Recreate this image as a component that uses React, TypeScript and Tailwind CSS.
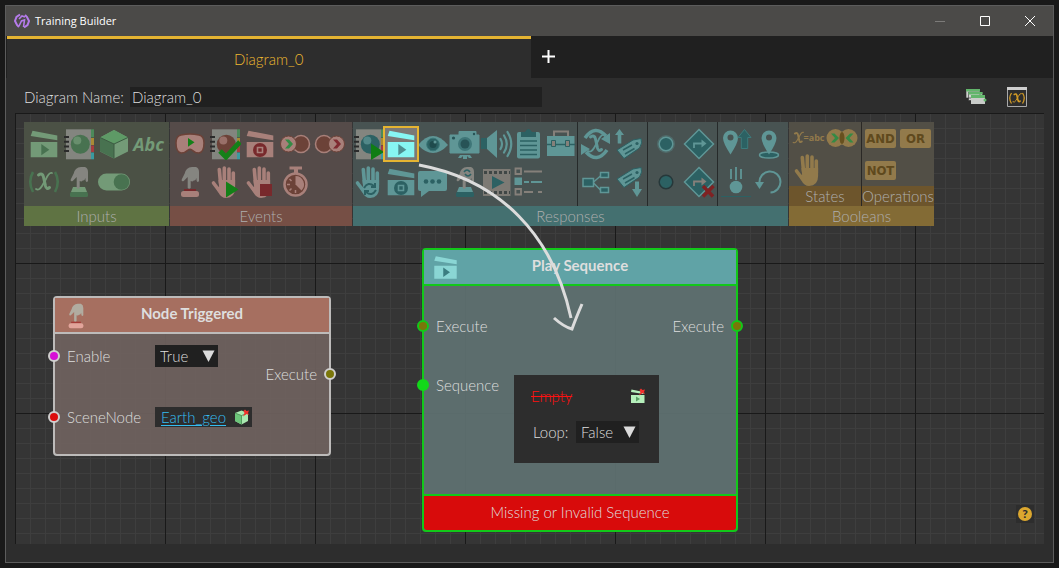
import { useState } from "react";
import clsx from "clsx";

type IconProps = { className?: string; size?: number } & React.PropsWithChildren;

interface Tool {
  name: string;
  icon: React.ReactNode;
  selected?: boolean;
}

const inputTools: Tool[] = [
  { name: "Sequence", icon: <Clapper mark="play" /> },
  { name: "Material", icon: <Notebook /> },
  { name: "Scene node", icon: <Cube /> },
  { name: "Text", icon: <TextIcon /> },
  { name: "Variable", icon: <VariableIcon /> },
  { name: "Trigger", icon: <PressHand /> },
  { name: "Toggle", icon: <Toggle /> },
];

const eventTools: Tool[] = [
  { name: "Session started", icon: <Headset /> },
  { name: "Material applied", icon: <Notebook mark="check" /> },
  { name: "Sequence stopped", icon: <Clapper mark="stop" /> },
  { name: "Zone entered", icon: <Zones side="left" /> },
  { name: "Zone left", icon: <Zones side="right" /> },
  { name: "Node triggered", icon: <PressHand flat /> },
  { name: "Grab started", icon: <Hand mark="play" /> },
  { name: "Grab stopped", icon: <Hand mark="stop" /> },
  { name: "Timer", icon: <Stopwatch /> },
];

const responseTools: Tool[][] = [
  [
    { name: "Apply material", icon: <Notebook mark="play" /> },
    { name: "Play sequence", icon: <Clapper mark="play" />, selected: true },
    { name: "Visibility", icon: <Eye /> },
    { name: "Viewpoint", icon: <Camera /> },
    { name: "Sound", icon: <Speaker /> },
    { name: "Clipboard", icon: <Clipboard /> },
    { name: "Toolbox", icon: <Toolbox /> },
    { name: "Switch grab", icon: <Hand mark="cycle" /> },
    { name: "Stop sequence", icon: <Clapper mark="stop" /> },
    { name: "Message", icon: <Message /> },
    { name: "Switch trigger", icon: <PressHand mark /> },
    { name: "Video", icon: <Film /> },
    { name: "Checklist", icon: <Checklist /> },
  ],
  [
    { name: "Set variable", icon: <CycleVariable /> },
    { name: "Send tag", icon: <Tag up /> },
    { name: "Hierarchy", icon: <Hierarchy /> },
    { name: "Receive tag", icon: <Tag /> },
  ],
  [
    { name: "Highlight", icon: <Dot glow /> },
    { name: "Show path", icon: <RoadSign /> },
    { name: "Clear highlight", icon: <Dot /> },
    { name: "Hide path", icon: <RoadSign crossed /> },
  ],
  [
    { name: "Move to", icon: <PinUp /> },
    { name: "Location", icon: <Pin /> },
    { name: "Drop", icon: <Drop /> },
    { name: "Reset", icon: <Undo /> },
  ],
];

const stateTools: Tool[] = [
  { name: "Compare", icon: <Compare /> },
  { name: "Overlap", icon: <Overlap /> },
  { name: "Grabbed", icon: <Hand /> },
];

export default function App() {
  const [name, setName] = useState("Diagram_0");

  return (
    <div className="flex min-h-screen flex-col bg-[#191919] p-[5px] font-['Lato',sans-serif] text-[15px] font-light text-[#dedede]">
      <main className="flex flex-1 flex-col border border-[#5c5c5c] bg-[#2d2d2d]">
        <TitleBar />
        <nav className="flex h-[42px] bg-[#202020]">
          <button className="ml-px w-1/2 border-t-3 border-[#e5b432] bg-[#2d2d2d] pt-[2px] text-[#ecb730]">
            {name}
          </button>
          <button aria-label="New diagram" className="px-[11px] pb-[2px] text-white">
            <svg width="13" height="13" viewBox="0 0 13 13" stroke="currentColor" strokeWidth="2">
              <path d="M6.500 0v13M0 6.500h13" />
            </svg>
          </button>
        </nav>

        <div className="flex items-center px-[18px] pt-[9px] pb-[6px]">
          <label htmlFor="diagram-name" className="w-[106px] leading-5">
            Diagram Name:
          </label>
          <input
            id="diagram-name"
            className="h-5 w-[412px] bg-[#202020] px-[2px] outline-none"
            value={name}
            onChange={(e) => setName(e.target.value)}
          />
          <div className="ml-auto flex items-center gap-5 pr-2">
            <button aria-label="Layers">
              <LayersIcon />
            </button>
            <button aria-label="Variables">
              <VariablesWindow />
            </button>
          </div>
        </div>

        <section className="relative mx-[9px] mb-[18px] flex-1 overflow-hidden border-t border-l border-[#191919] bg-[#353535] bg-[linear-gradient(90deg,transparent_149px,#191919_149px),linear-gradient(180deg,transparent_149px,#191919_149px),linear-gradient(90deg,transparent_14px,#3e3e3e_14px),linear-gradient(180deg,transparent_14px,#3e3e3e_14px)] bg-[size:150px_150px,150px_150px,15px_15px,15px_15px] p-2">
          <Palette />
          <NodeTriggered />
          <PlaySequence />
          <svg
            className="pointer-events-none absolute top-0 left-0"
            width="600"
            height="240"
            viewBox="16 114 600 240"
            fill="none"
            stroke="#dcdcdc"
            strokeWidth="3"
          >
            <path d="M419 165C500 180 553 235 571 318" />
            <path d="M554 318Q564 327 572 329Q576 318 582 304" />
          </svg>
          <button
            aria-label="Help"
            className="absolute right-[10px] bottom-[21px] flex size-[18px] items-center justify-center bg-[#2d2d2d]"
          >
            <span className="size-[14px] rounded-full bg-[#dba72f] text-center text-[12px] leading-[14px] font-black text-[#2d2d2d]">
              ?
            </span>
          </button>
        </section>
      </main>
    </div>
  );
}

function TitleBar() {
  return (
    <header className="flex h-[30px] items-center bg-[#4b4a48] pl-2 text-white">
      <svg width="16" height="16" viewBox="0 0 16 16" fill="none" stroke="#b57bea" strokeWidth="2">
        <path d="M6 1.500L2.500 4 1 8l2 4 2 2" />
        <path d="M10 14.500l3.500-2.500L15 8l-2-4-2-2" />
        <path d="M5 13l2.500-5 3-1-1 7M5 6l3-3 3 1" strokeWidth="1.600" />
      </svg>
      <h1 className="ml-[5px] font-['Open_Sans',sans-serif] text-[11px] font-normal">
        Training Builder
      </h1>
      <div className="ml-auto flex">
        <button aria-label="Minimize" className="flex w-[45px] justify-center text-[#7c7b79]">
          <WindowGlyph d="M0 5.500h10" />
        </button>
        <button aria-label="Maximize" className="flex w-[45px] justify-center">
          <WindowGlyph d="M.5.5h9v9h-9z" />
        </button>
        <button aria-label="Close" className="flex w-[46px] justify-center">
          <WindowGlyph d="M0 0l10 10M10 0L0 10" />
        </button>
      </div>
    </header>
  );
}

function WindowGlyph(props: { d: string }) {
  return (
    <svg width="10" height="10" viewBox="0 0 10 10" fill="none" stroke="currentColor">
      <path d={props.d} />
    </svg>
  );
}

/* Palette */

function Palette() {
  return (
    <div className="flex w-max gap-px">
      <Group title="Inputs" className="w-[145px] bg-[#4b5145] text-[#739a77] [--dark:#487250]" bar="bg-[#5f7343]">
        <Tools tools={inputTools} cell="h-[38px] w-[35px]" className="flex-1 px-[2px] pt-[3px]" />
      </Group>
      <Group
        title="Events"
        className="w-[182px] bg-[#554b49] text-[#a8807a] [--dark:#6c4238] [--stop:#78292c]"
        bar="bg-[#764f45]"
      >
        <Tools tools={eventTools} cell="h-[38px] w-[35px]" className="flex-1 px-[2px] pt-[3px]" />
      </Group>
      <Group title="Responses" className="bg-[#485352] text-[#5f9696] [--dark:#2c6163]" bar="bg-[#447070]">
        <div className="flex flex-1 gap-px bg-[#262a2a]">
          {responseTools.map((tools, i) => (
            <Tools
              key={i}
              tools={tools}
              cell={i === 0 ? "h-[38px] w-8" : "h-[38px] w-[33px]"}
              className={clsx(
                "flex-none bg-[#485352] pt-[3px]",
                i === 0 ? "w-[224px]" : i === 3 ? "w-[70px] px-px" : "w-[69px] px-px"
              )}
            />
          ))}
        </div>
      </Group>
      <Group title="Booleans" className="bg-[#524f46] text-[#927a4b] [--dark:#67501f]" bar="bg-[#836b35]">
        <div className="flex flex-1 gap-px bg-[#2a2825]">
          <div className="flex w-[72px] flex-col bg-[#524f46]">
            <Tools tools={stateTools} cell="h-8 w-[34px]" className="flex-1 px-[2px]" />
            <Caption className="bg-[#6d552c]">States</Caption>
          </div>
          <div className="flex w-[72px] flex-col bg-[#524f46]">
            <div className="flex flex-1 flex-wrap content-start gap-x-[4px] gap-y-[13px] px-[3px] pt-[7px]">
              {["AND", "OR", "NOT"].map((op) => (
                <button
                  key={op}
                  className="h-[19px] w-[31px] rounded-[2px] bg-[#927a4b] font-['Liberation_Sans_Narrow','DejaVu_Sans_Condensed',sans-serif] text-[13px] leading-[19px] font-bold text-[#5f491d]"
                >
                  {op}
                </button>
              ))}
            </div>
            <Caption className="bg-[#6d552c]">Operations</Caption>
          </div>
        </div>
      </Group>
    </div>
  );
}

function Group(props: { title: string; className: string; bar: string } & React.PropsWithChildren) {
  return (
    <div className={clsx("flex h-[104px] flex-col", props.className)}>
      {props.children}
      <Caption className={props.bar}>{props.title}</Caption>
    </div>
  );
}

function Caption(props: { className?: string } & React.PropsWithChildren) {
  return (
    <div className={clsx("h-5 text-center leading-5 text-[#aeaeae]", props.className)}>
      {props.children}
    </div>
  );
}

function Tools(props: { tools: Tool[]; cell: string; className?: string }) {
  return (
    <div className={clsx("flex flex-wrap content-start", props.className)}>
      {props.tools.map((tool) => (
        <button
          key={tool.name}
          aria-label={tool.name}
          className={clsx("flex items-center justify-center", props.cell)}
        >
          {tool.selected ? (
            <span className="z-10 bg-[#7b7976] text-[#87f6f3] outline-2 outline-[#e5b432] [--dark:#4f8f91]">
              {tool.icon}
            </span>
          ) : (
            tool.icon
          )}
        </button>
      ))}
    </div>
  );
}

/* Diagram nodes */

function NodeTriggered() {
  return (
    <article className="absolute top-[182px] left-[37px] h-[160px] w-[278px] rounded-[4px] border-2 border-[#bdbbba] bg-[#6e615eee]">
      <header className="relative h-9 border-b-2 border-[#bdbbba] bg-[#a66f60]">
        <span className="absolute top-[5px] left-2 text-[#e2a49a] [--hand:#b1aca0] [--stop:#a43c38]">
          <PressHand flat size={26} />
        </span>
        <h2 className="text-center leading-[30px] font-bold">Node Triggered</h2>
      </header>
      <div className="flex justify-between">
        <div className="flex flex-col gap-10 pt-[11px]">
          <div className="flex h-[22px] items-center">
            <Port className="-ml-[7px] border-[#d0cfce] bg-[#d60fd6]" />
            <label htmlFor="enable" className="w-[95px] pl-[7px]">
              Enable
            </label>
            <Dropdown id="enable" value="True" />
          </div>
          <div className="flex h-5 items-center">
            <Port className="-ml-[7px] border-[#d0cfce] bg-[#dc0d0d]" />
            <span className="w-[95px] pl-[7px]">SceneNode</span>
            <div className="flex h-5 w-[97px] items-center justify-between bg-[#2d2d2d] pr-[2px] pl-[6px]">
              <a href="#earth" className="text-[#35bdf0] underline underline-offset-2">
                Earth_geo
              </a>
              <PickIcon kind="cube" />
            </div>
          </div>
        </div>
        <div className="mt-[30px] flex h-5 items-center gap-[7px]">
          Execute
          <Port className="-mr-[7px] border-[#d0cfce] bg-[#7a7609]" />
        </div>
      </div>
    </article>
  );
}

function PlaySequence() {
  return (
    <article className="absolute top-[134px] left-[406px] flex h-[284px] w-[316px] flex-col rounded-[4px] border-2 border-[#12c81a] bg-[#5f7171f0]">
      <header className="relative h-9 border-b-2 border-[#12c81a] bg-[#60a3a6]">
        <span className="absolute top-[4px] left-2 text-[#8ad6d4] [--dark:#3b7d80]">
          <Clapper mark="play" size={27} />
        </span>
        <h2 className="text-center leading-[30px] font-bold">Play Sequence</h2>
      </header>
      <div className="flex flex-1 justify-between pt-[30px]">
        <div className="flex flex-col gap-[39px]">
          <div className="flex h-5 items-center gap-[7px]">
            <Port className="-ml-[7px] border-[#12c81a] bg-[#7a7609]" />
            Execute
          </div>
          <div className="flex items-start">
            <div className="flex h-5 w-[90px] items-center gap-[7px]">
              <Port className="-ml-[7px] border-[#12d81a] bg-[#12d81a]" />
              Sequence
            </div>
            <div className="flex h-[88px] w-[145px] flex-col gap-[14px] bg-[#2d2d2d] px-[13px] pt-[10px]">
              <div className="flex h-[22px] items-center justify-between pl-1">
                <span className="text-[#ff1010] line-through">Empty</span>
                <PickIcon kind="clapper" />
              </div>
              <div className="flex h-[22px] items-center justify-between pr-[7px] pl-[6px]">
                <label htmlFor="loop">Loop:</label>
                <Dropdown id="loop" value="False" />
              </div>
            </div>
          </div>
        </div>
        <div className="flex h-5 items-center gap-[7px]">
          Execute
          <Port className="-mr-[7px] border-[#12c81a] bg-[#7a7609]" />
        </div>
      </div>
      <footer className="h-9 rounded-b-[3px] border-t-2 border-[#12c81a] bg-[#d80b0b] text-center leading-8">
        Missing or Invalid Sequence
      </footer>
    </article>
  );
}

function Port(props: { className: string }) {
  return <span className={clsx("size-3 shrink-0 rounded-full border-2", props.className)} />;
}

function Dropdown(props: { id: string; value: string }) {
  return (
    <div className="relative">
      <select
        id={props.id}
        defaultValue={props.value}
        className="block h-[22px] w-[63px] appearance-none bg-[#202020] pl-[5px] outline-none"
      >
        <option>True</option>
        <option>False</option>
      </select>
      <svg
        className="pointer-events-none absolute top-[5px] right-[3px]"
        width="13"
        height="12"
        viewBox="0 0 13 12"
        fill="#dcdcdc"
      >
        <path d="M.5.5h12L6.500 12z" />
      </svg>
    </div>
  );
}

/* Icons: currentColor is the light tone, --dark the deep one */

function Icon(props: IconProps) {
  const { size = 32 } = props;
  return (
    <svg width={size} height={size} viewBox="0 0 32 32" fill="currentColor" className={clsx("shrink-0", props.className)}>
      {props.children}
    </svg>
  );
}

function Clapper(props: { mark: "play" | "stop"; size?: number }) {
  return (
    <Icon size={props.size}>
      <path d="M4.500 2.700L29.300 7.500v4.700L2.700 8zM2.700 14h26.600v15.300H2.700z" />
      {props.mark === "play" ? (
        <path d="M13.300 16l8 5.700-8 5.600z" fill="var(--dark)" />
      ) : (
        <>
          <circle cx="16" cy="22" r="7" fill="var(--stop,var(--dark))" />
          <path d="M13.500 19.500h5v5h-5z" fill="none" stroke="currentColor" strokeWidth="1.600" />
        </>
      )}
    </Icon>
  );
}

function Notebook(props: { mark?: "check" | "play" }) {
  return (
    <Icon>
      <path d="M3 1.300h25v30H3z" fill="#83857f" />
      <path d="M28 1.300h3v8h-3z" fill="#4c8a5a" />
      <path d="M28 10h3v7h-3z" fill="#a98a35" />
      <path d="M28 17.500h3v6.500h-3z" fill="#a83c40" />
      <path d="M28 24.500h3v6.800h-3z" fill="#3a9aa0" />
      <path d="M1 8h5v2H1zM1 12.700h5v2H1zM1 17.400h5v2H1zM1 22h5v2H1z" fill="#2b2b2b" />
      <circle cx="17.300" cy="16.300" r="9.500" fill="var(--dark)" />
      <circle cx="14.300" cy="12.600" r="4" opacity=".75" />
      {props.mark === "check" && (
        <path d="M11 23l6 6 14-15" fill="none" stroke="#148018" strokeWidth="5" />
      )}
      {props.mark === "play" && <path d="M18 15.500L31 24 18 32z" fill="#0f7d14" />}
    </Icon>
  );
}

function Cube() {
  return (
    <Icon>
      <path d="M16 2l14 7.500v14L16 30.500 2 23.500v-14z" />
      <path d="M16 2l14 7.500L16 16 2 9.500z" fill="#5e9a66" />
      <path d="M2 9.500L16 16v14.500L2 23.500z" fill="var(--dark)" />
      <path d="M2 9.500L16 16l14-6.500M16 16v14.500" fill="none" stroke="#3c5b42" />
    </Icon>
  );
}

function TextIcon() {
  return (
    <span className="font-['Open_Sans',sans-serif] text-[18px] leading-8 font-bold italic">Abc</span>
  );
}

function VariableIcon() {
  return (
    <Icon>
      <g fill="none" stroke="var(--dark)" strokeWidth="2.600">
        <path d="M5 6Q-.5 15.500 5 26M27 6q5.500 9.500 0 20" />
      </g>
      <ScriptX />
    </Icon>
  );
}

// the swashed cross used wherever a variable is meant
function ScriptX(props: { color?: string }) {
  const { color = "currentColor" } = props;
  return (
    <g fill="none" stroke={color} strokeLinecap="round">
      <path d="M10.500 9q4-2.500 5 2l2 9q1 4 4 1.500" strokeWidth="3" />
      <path d="M24 7q-3-1-6 6l-4 7q-3 5-6 3" strokeWidth="1.800" />
    </g>
  );
}

function PressHand(props: { flat?: boolean; mark?: boolean; size?: number }) {
  return (
    <Icon size={props.size}>
      {props.flat ? (
        <>
          <path d="M10 23h12v2H10z" fill="var(--stop,#a43c38)" />
          <rect x="7" y="25" width="18" height="6" rx="2.500" />
        </>
      ) : (
        <>
          <path d="M10 21h12l2 5H8z" />
          <rect x="7" y="26" width="18" height="5" rx="1.500" fill="var(--dark)" />
        </>
      )}
      <path
        d="M13 3q2-2 5-2h4q3 1 3 5v9q-1.200 2-2.300 0l-.4-3q-.6 3-2.600 2.500-1 1.500-3 .5V22q-1.500 1.500-3 0V11l-4 4q-2.500 1-2-1.500l3-6q.5-3 2.300-4.500z"
        fill="var(--hand,#858580)"
      />
      {props.mark && (
        <path d="M15 6q3-4 6 0M22 8q-3 4-6 0" fill="none" stroke="var(--dark)" strokeWidth="1.600" />
      )}
    </Icon>
  );
}

function Toggle() {
  return (
    <Icon>
      <rect x="0" y="7.500" width="32" height="17" rx="8.500" />
      <circle cx="23.500" cy="16" r="7.800" fill="var(--dark)" />
    </Icon>
  );
}

function Headset() {
  return (
    <Icon>
      <path
        d="M7 7q9-2 18 0 5 1 5 8 0 9-5 10-4 0-7-3-2-1.500-4 0-3 3-7 3-5-1-5-10 0-7 5-8z"
        stroke="var(--dark)"
        strokeWidth="1.500"
      />
      <path d="M14 10l6.500 4.300-6.500 4.400z" fill="#148018" />
    </Icon>
  );
}

function Zones(props: { side: "left" | "right" }) {
  const left = props.side === "left";
  return (
    <Icon>
      <circle cx={left ? 22 : 10} cy="16" r="8.500" fill="var(--dark)" stroke="currentColor" strokeWidth="1.500" />
      <circle cx={left ? 9.500 : 22.500} cy="16" r="8" stroke="var(--dark)" />
      {left ? (
        <path d="M6 11.500h4l4 4.500-4 4.500H6l4-4.500z" fill="#348a45" />
      ) : (
        <path d="M19 11.500h4l4 4.500-4 4.500h-4l4-4.500z" fill="#7f2a30" />
      )}
    </Icon>
  );
}

function Hand(props: { mark?: "play" | "stop" | "cycle" }) {
  return (
    <Icon>
      <g stroke="currentColor" strokeWidth="3.600" strokeLinecap="round">
        <path d="M10.300 3.500L11.500 17M15.300 2v14M20 3v14M24.300 7v12M4.500 17l6 8" />
      </g>
      <path d="M9.500 14h16.600v8q0 9.500-9 10-5 0-8-6l-3-6 4 1z" />
      {props.mark === "play" && <path d="M17 15.500l12.500 8L17 31.500z" fill="#148018" />}
      {props.mark === "stop" && <path d="M16 18h12v12H16z" fill="#78292c" />}
      {props.mark === "cycle" && (
        <g fill="none" stroke="var(--dark)" strokeWidth="2">
          <path d="M11 22q4-7 10-2M23 24q-4 7-10 2" />
          <path d="M22 17v4h-4M12 29v-4h4" />
        </g>
      )}
    </Icon>
  );
}

function Stopwatch() {
  return (
    <Icon>
      <path d="M10.500.5h12.500v3h-4V7h-4V3.500h-4.500z" />
      <circle cx="16.500" cy="18.500" r="11" fill="var(--dark)" stroke="currentColor" strokeWidth="2.500" />
      <path d="M16.500 18.500V10a8.500 8.500 0 0 1 6 14.500z" />
      <path d="M8 18.500h3M16.500 24v3M10.500 13l2 2M10.500 24.500l2-2" stroke="currentColor" strokeWidth="1.500" />
    </Icon>
  );
}

function Eye() {
  return (
    <Icon>
      <path d="M1 17Q16-1 31 17 16 33 1 17z" />
      <circle cx="16" cy="16.500" r="6.300" fill="var(--dark)" stroke="#3a7879" />
      <circle cx="16" cy="16.500" r="3.500" fill="#1f4b4d" />
      <circle cx="18" cy="14" r="1.500" />
    </Icon>
  );
}

function Camera() {
  return (
    <Icon>
      <path d="M10 7V3.500h17V7h3v18H1V7z" stroke="currentColor" strokeLinejoin="round" />
      <path d="M11 27h10l2 3h-3l-2-2v3h-4v-3l-2 2H9z" />
      <circle cx="16" cy="16" r="7" fill="#3f7678" />
      <circle cx="16" cy="16" r="4.500" fill="#275356" />
      <circle cx="4.500" cy="10" r="1.600" fill="#275356" />
      <circle cx="25" cy="6" r="1.200" fill="#275356" />
    </Icon>
  );
}

function Speaker() {
  return (
    <Icon>
      <path d="M0 10h6v11H0z" fill="var(--dark)" />
      <path d="M6 10L16 2v28L6 21z" />
      <g fill="none" stroke="currentColor" strokeWidth="2.200" strokeLinecap="round">
        <path d="M19.500 11q3 5 0 10M23 7.500q5.500 8.500 0 17M26.500 4q7.500 12 0 24" />
      </g>
    </Icon>
  );
}

function Clipboard() {
  return (
    <Icon>
      <rect x="4" y="4" width="23" height="26.500" rx="2" />
      <path d="M8 9V4h4q3.500-6 7 0h4v5z" fill="var(--dark)" />
      <path d="M7 13h17M7 17.500h17M7 22h17M7 26.500h17" stroke="var(--dark)" strokeWidth="1.600" />
    </Icon>
  );
}

function Toolbox() {
  return (
    <Icon>
      <path d="M9 9V3.500h14V9" fill="none" stroke="#85807a" strokeWidth="2" />
      <path d="M2 8h27.500v20H2z" />
      <path d="M2 16.500h28" stroke="var(--dark)" strokeWidth="1.500" />
      <path d="M6.500 12.500h4v6h-4zM20.500 12.500h4v6h-4z" fill="#85807a" stroke="var(--dark)" />
    </Icon>
  );
}

function Message() {
  return (
    <Icon>
      <path d="M3 5h25q2 0 2 2v16q0 2-2 2H12l-8 6v-6H3q-2 0-2-2V7q0-2 2-2z" />
      <g fill="var(--dark)">
        <circle cx="9" cy="15.500" r="2.300" />
        <circle cx="15.500" cy="15.500" r="2.300" />
        <circle cx="22" cy="15.500" r="2.300" />
      </g>
    </Icon>
  );
}

function Film() {
  return (
    <Icon>
      <path d="M2 3h27.500v27H2z" fill="#7d7a74" />
      <path d="M3 6.500h26M3 26.500h26" stroke="#3f4645" strokeWidth="3" strokeDasharray="3 2" />
      <path d="M11 10l12.500 6.500L11 23z" fill="var(--dark)" />
    </Icon>
  );
}

function Checklist() {
  return (
    <Icon>
      <g stroke="#85807a" strokeWidth="1.800">
        <path d="M2.500 2.500h5.500v5.500H2.500zM2.500 23h5.500v5.500H2.500z" fill="none" />
        <path d="M11 5.500h18M11 26h9M25 26h4" />
      </g>
      <path d="M1.500 11.500h7.500v7.500H1.500zM11 15h5v2h-5zM18 15h11v2H18z" />
    </Icon>
  );
}

function CycleVariable() {
  return (
    <Icon>
      <g fill="none" stroke="currentColor" strokeWidth="3.500">
        <path d="M5 10q10-14 21-2M27 22q-10 14-21 2" />
      </g>
      <path d="M30 5v11l-9-5zM1 27V16l9 5z" />
      <ScriptX />
    </Icon>
  );
}

function Tag(props: { up?: boolean }) {
  return (
    <Icon>
      <g transform={props.up ? "translate(2 9)" : "translate(2 0)"}>
        <path d="M2 13L18 3l8-1.500q2 4-1.500 9.500L9 21.500z" stroke="var(--dark)" />
        <path d="M8 13l9-5M10 17l9.500-5.500" stroke="var(--dark)" strokeWidth="1.500" />
        <circle cx="22" cy="6.500" r="1.600" fill="var(--dark)" />
      </g>
      {props.up ? <path d="M6.500 1l4.500 6H8.300v8.500H4.700V7H2z" /> : <path d="M22 15.500h4V23h3l-5 8-5-8h3z" />}
    </Icon>
  );
}

function Hierarchy() {
  return (
    <Icon>
      <g fill="none" stroke="currentColor" strokeWidth="1.500">
        <path d="M13 16.500l8-7M13 16.500l8 8" />
        <path d="M3 12.500h10.500v8H3zM20.500 6.500h8v5h-8zM20.500 21.500h8v5h-8z" fill="var(--dark)" />
      </g>
    </Icon>
  );
}

function Dot(props: { glow?: boolean }) {
  return (
    <Icon>
      {props.glow && <circle cx="16" cy="16" r="9" opacity=".35" />}
      <circle
        cx="16"
        cy="16"
        r="6.800"
        fill="var(--dark)"
        stroke={props.glow ? "currentColor" : "#26383a"}
        strokeWidth="1.500"
      />
    </Icon>
  );
}

function RoadSign(props: { crossed?: boolean }) {
  return (
    <Icon>
      <path d="M16 1.500L30.500 16 16 30.500 1.500 16z" fill="var(--dark)" stroke="currentColor" strokeWidth="1.500" />
      <g className={props.crossed ? "text-[#85807a]" : undefined} fill="currentColor">
        <path d="M11 20v-4.500h9" fill="none" stroke="currentColor" strokeWidth="1.800" />
        <path d="M18.500 11.500l5 4-5 4z" />
      </g>
      {props.crossed && <path d="M20 20l10 10.500M30.500 20L20 30.500" stroke="#7f2223" strokeWidth="3.500" />}
    </Icon>
  );
}

function PinShape() {
  return (
    <>
      <path d="M16 26.500Q8.500 15 8.500 10a7.500 7.500 0 0 1 15 0q0 5-7.500 16.500z" />
      <circle cx="16" cy="9.500" r="3" fill="#485352" />
    </>
  );
}

function PinUp() {
  return (
    <Icon>
      <g transform="translate(-5.500)">
        <PinShape />
      </g>
      <path d="M24.500 1.500l6.500 8h-3.300v11h-6.400v-11H18z" fill="var(--dark)" stroke="#3c7b7c" />
    </Icon>
  );
}

function Pin() {
  return (
    <Icon>
      <ellipse cx="16" cy="27" rx="9.500" ry="3" fill="var(--dark)" stroke="currentColor" strokeWidth="1.500" />
      <PinShape />
    </Icon>
  );
}

function Drop() {
  return (
    <Icon>
      <path d="M11 3v10M16 1v13M21 3v10" stroke="currentColor" strokeWidth="1.800" />
      <circle cx="16" cy="21" r="6.300" />
      <path d="M1 30.500h30" stroke="var(--dark)" />
    </Icon>
  );
}

function Undo() {
  return (
    <Icon>
      <path d="M6.500 17a10.500 10.500 0 1 1 11 9.500" fill="none" stroke="currentColor" strokeWidth="2" />
      <path d="M2 16h9l-4.500 7z" />
    </Icon>
  );
}

function Compare() {
  return (
    <span className="flex items-center">
      <svg width="12" height="16" viewBox="6 6 19 20">
        <ScriptX />
      </svg>
      <span className="font-['Liberation_Sans_Narrow','Open_Sans',sans-serif] text-[9px] font-bold">=abc</span>
    </span>
  );
}

function Overlap() {
  return (
    <Icon>
      <circle cx="9.500" cy="16" r="9" />
      <circle cx="22.500" cy="16" r="9" />
      <ellipse cx="16" cy="16" rx="2.500" ry="6" fill="var(--dark)" />
      <g fill="#348a45">
        <path d="M5 11.500h3.500L13 16l-4.500 4.500H5L9 16z" />
        <path d="M27.500 11.500H24L19.500 16l4.500 4.500h3.500L23.500 16z" />
      </g>
    </Icon>
  );
}

function LayersIcon() {
  return (
    <svg width="21" height="16" viewBox="0 0 21 16">
      <path d="M0 0h14v9H0zM2.500 3h14v8.500h-14z" fill="#cfd2cf" stroke="#2d2d2d" strokeWidth=".6" />
      <path d="M0 0h14v2.500H0zM2.500 3h14v2.500h-14z" fill="#62b56b" />
      <path d="M5 6h14v9H5z" fill="#c9ccc9" />
      <path d="M5 6h14v3H5z" fill="#62b56b" />
      <circle cx="19" cy="11" r="1.500" fill="#62b56b" />
    </svg>
  );
}

function VariablesWindow() {
  return (
    <svg width="20" height="20" viewBox="0 0 20 20" fill="none">
      <path d="M.5.5h19v19H.5z" stroke="#a9a9a9" />
      <path d="M0 0h20v3H0z" fill="#cfcfcf" />
      <path d="M4.500 6Q1 11 4.500 16.500M15.500 6q3.500 5 0 10.500" stroke="#d39b25" strokeWidth="1.300" />
      <g transform="translate(1.700 2.700) scale(.53)">
        <ScriptX color="#d39b25" />
      </g>
    </svg>
  );
}

function PickIcon(props: { kind: "cube" | "clapper" }) {
  return (
    <svg width="16" height="16" viewBox="0 0 16 16">
      {props.kind === "cube" ? (
        <>
          <path d="M7.500 1.500L14 4v8l-6.500 3.500L1 12V4z" fill="#a9e9b0" />
          <path d="M1 4l6.500 2.500v9L1 12z" fill="#6cc57a" />
          <path d="M1 4l6.500 2.500L14 4M7.500 6.500v9" fill="none" stroke="#3d7d49" strokeWidth=".7" />
        </>
      ) : (
        <>
          <path d="M1.500 1.500l12 2.500v2L1 4zM1 7h13.500v8H1z" fill="#b5efbb" />
          <path d="M6 8.500l4 2.500-4 2.500z" fill="#5aa065" />
        </>
      )}
      <path d="M11 .5L12.500 2 15 1.500l-1 2.500 1 2-2.500-1L9 7.500 10.500 4 9.500 2z" fill="#f0302c" />
    </svg>
  );
}
